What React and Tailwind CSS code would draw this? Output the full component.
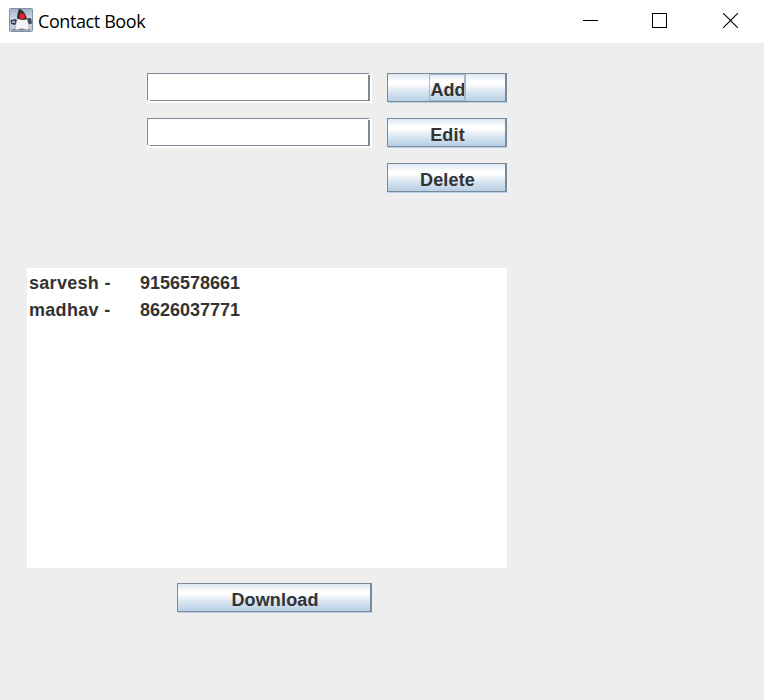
import React from "react";

function DukeIcon() {
  return (
    <svg width="24" height="24" viewBox="0 0 24 24">
      <defs>
        <linearGradient id="tile" x1="0" y1="0" x2="0" y2="1">
          <stop offset="0" stopColor="#a3b3c4" />
          <stop offset="0.5" stopColor="#d3dde8" />
          <stop offset="1" stopColor="#b3c3d4" />
        </linearGradient>
      </defs>
      <rect x="0.5" y="0.5" width="23" height="23" rx="1" fill="url(#tile)" stroke="#7e93aa" />
      <path d="M1.5 12 L7 11 L9 14 L6 17 L2 16 Z" fill="#36424d" />
      <path d="M17.5 10.5 L22 10 L23 15.5 L18.5 16.5 Z" fill="#3b4650" />
      <path d="M3 13 L6 13 L6 15 L3 15 Z" fill="#8fb0c8" />
      <path d="M3 21 H21 V22.5 H3 Z" fill="#76828e" />
      <path d="M9 9 L17.5 10 C19.5 14 20.2 18 19.5 21.5 C17 22.5 15 20.5 13 20.5 C10.5 20.5 8.5 22.5 6.5 21.5 C6.5 17 7.5 13 9 9 Z" fill="#f4f4f4" stroke="#999" strokeWidth="0.4" />
      <path d="M10 1 C13.5 1.5 16.5 5 18 11 C15 12.5 11 12 8 10.5 C8.3 6 9 3 10 1 Z" fill="#303030" />
      <circle cx="13.2" cy="8.4" r="2.8" fill="#e3242b" />
    </svg>
  );
}

function TitleBar() {
  return (
    <header className="flex h-[43px] items-start bg-white pl-[9px] text-black">
      <div className="mt-2 h-6 w-6">
        <DukeIcon />
      </div>
      <h1 className="ml-[5px] mt-2 w-[120px] whitespace-nowrap font-['Open_Sans','Noto_Sans',sans-serif] text-[18px] leading-[26px] tracking-[-0.4px]">
        Contact Book
      </h1>
      <div className="ml-auto mr-[26px] mt-[13px] flex">
        <svg width="15" height="15" shapeRendering="crispEdges">
          <path d="M0 7.5H15" stroke="black" />
        </svg>
        <svg className="ml-[54px]" width="15" height="15" shapeRendering="crispEdges">
          <rect x="0.5" y="0.5" width="14" height="14" fill="none" stroke="black" />
        </svg>
        <svg className="ml-14" width="15" height="15">
          <path d="M0 0L15 15M15 0L0 15" stroke="black" strokeWidth="1.1" />
        </svg>
      </div>
    </header>
  );
}

function MetalButton({ label, wide, focused }) {
  return (
    <button
      className={`flex h-[29px] items-center justify-center border border-r-2 border-[#7a8a99] bg-[linear-gradient(to_bottom,#dde8f3_0%,#ffffff_30%,#ffffff_36%,#dde8f3_62%,#b8cfe5_100%)] font-bold shadow-[1px_1px_0_#b8cfe5] [clip-path:inset(0_0_-1px_0)] ${wide ? "w-[195px]" : "w-[120px]"}`}
    >
      {focused ? (
        <span className="ml-px flex h-[27px] w-[37px] overflow-hidden border border-r-2 border-[#a3b8cc] pl-[1px] pt-[5px] leading-[20px]">
          {label}
        </span>
      ) : (
        <span className="pl-[2px] pt-[5px] leading-[21px] tracking-[0.15px]">{label}</span>
      )}
    </button>
  );
}

function MetalField() {
  return (
    <svg width="225" height="30" shapeRendering="crispEdges">
      <path d="M1 1H223V2H225V30H0V28H1Z" fill="white" />
      <path d="M0 0H222V1H1V27H0Z" fill="#7a8a99" />
      <path d="M3 27H221V2H223V28H3Z" fill="#7a8a99" />
      <path d="M0 27H3V28H2V29H0Z" fill="#eeeeee" />
      <path d="M0 29H2V30H0Z" fill="white" />
    </svg>
  );
}

const contacts = [
  { name: "sarvesh -", phone: "9156578661" },
  { name: "madhav -", phone: "8626037771" },
];

export default function App() {
  return (
    <div className="h-[700px] w-[764px] overflow-hidden bg-[#eeeeee] font-['Liberation_Sans',Arial,sans-serif] text-[18px] text-[#333333]">
      <TitleBar />
      <main className="ml-[27px] w-[480px] pt-[30px]">
        <div className="flex h-[195px] justify-end gap-[15px]">
          <div className="flex flex-col gap-[15px]">
            <MetalField />
            <MetalField />
          </div>
          <div className="flex flex-col gap-4">
            <MetalButton label="Add" focused />
            <MetalButton label="Edit" />
            <MetalButton label="Delete" />
          </div>
        </div>
        <ul className="h-[300px] bg-white pl-[2px] pt-[2px] font-bold">
          {contacts.map((c) => (
            <li key={c.phone} className="flex h-[27px] leading-[27px]">
              <span className="w-[111px] tracking-[0.3px]">{c.name}</span>
              <span>{c.phone}</span>
            </li>
          ))}
        </ul>
        <div className="ml-[150px] mt-[15px]">
          <MetalButton label="Download" wide />
        </div>
      </main>
    </div>
  );
}
